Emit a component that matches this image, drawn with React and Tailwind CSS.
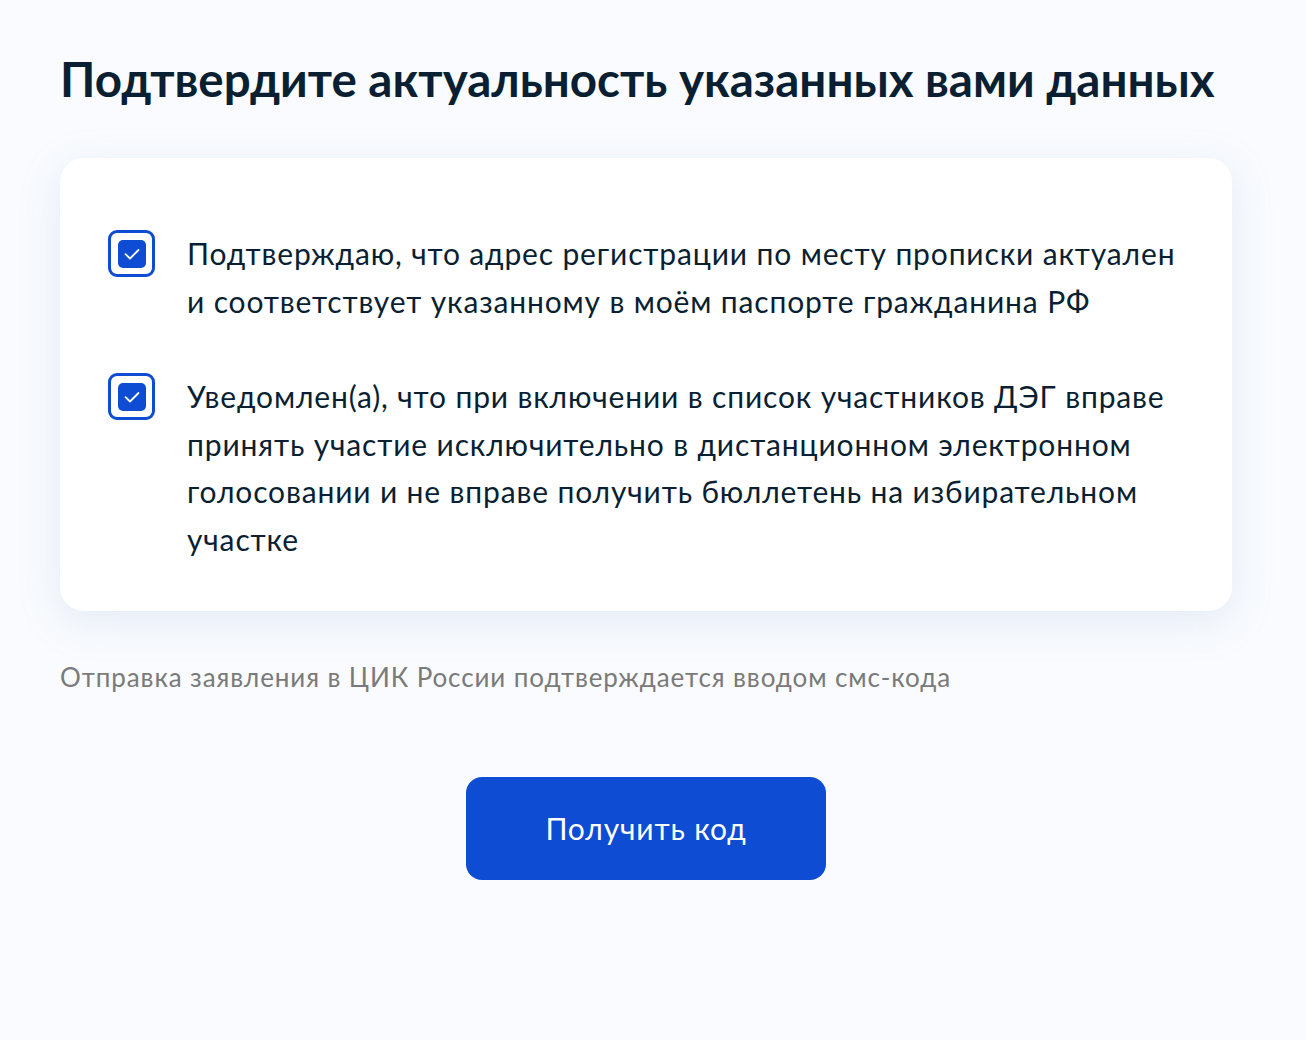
import React from "react";

function Check() {
  return (
    <div className="flex h-[47px] w-[47px] shrink-0 items-center justify-center rounded-[9px] border-[3px] border-[#0d4cd3] bg-white">
      <div className="flex h-[28px] w-[28px] items-center justify-center rounded-[5px] bg-[#0d4cd3]">
        <svg width="18" height="14" viewBox="0 0 18 14" fill="none">
          <path d="M2.5 7.2 L7 11.5 L15.5 3" stroke="white" strokeWidth="1.8" strokeLinecap="round" strokeLinejoin="round" />
        </svg>
      </div>
    </div>
  );
}

export default function App() {
  return (
    <div className="min-h-[1040px] w-full bg-[#f9fbfe] font-['Lato','Noto_Sans',sans-serif] text-[#0b1f33]">
      <div className="box-content w-[1172px] pl-[60px] pt-[51px]">
        <h1 className="text-[47.5px] font-bold leading-[56px] text-[#0b1f33]">
          Подтвердите актуальность указанных вами данных
        </h1>
        <div className="mt-[51px] rounded-[24px] bg-white px-[48px] pt-[72px] pb-[48px] shadow-[0_10px_40px_rgba(160,180,220,0.22)]">
          <div className="flex flex-col gap-[48px]">
            <div className="flex gap-[32px]">
              <Check />
              <p className="text-[30px] leading-[47.5px] tracking-[0.85px]">
                Подтверждаю, что адрес регистрации по месту прописки актуален
                <br />и соответствует указанному в моём паспорте гражданина РФ
              </p>
            </div>
            <div className="flex gap-[32px]">
              <Check />
              <p className="text-[30px] leading-[47.5px] tracking-[0.85px]">
                Уведомлен(а), что при включении в список участников ДЭГ вправе
                <br />
                принять участие исключительно в дистанционном электронном
                <br />
                голосовании и не вправе получить бюллетень на избирательном
                <br />
                участке
              </p>
            </div>
          </div>
        </div>
        <p className="mt-[50px] text-[26px] leading-[32px] tracking-[0.9px] text-[#7a7a7a]">
          Отправка заявления в ЦИК России подтверждается вводом смс-кода
        </p>
        <div className="mt-[84px] flex justify-center">
          <button className="flex h-[103px] w-[360px] items-center justify-center rounded-[16px] bg-[#0d4cd3] text-[30px] tracking-[0.85px] text-white">
            Получить код
          </button>
        </div>
      </div>
    </div>
  );
}
